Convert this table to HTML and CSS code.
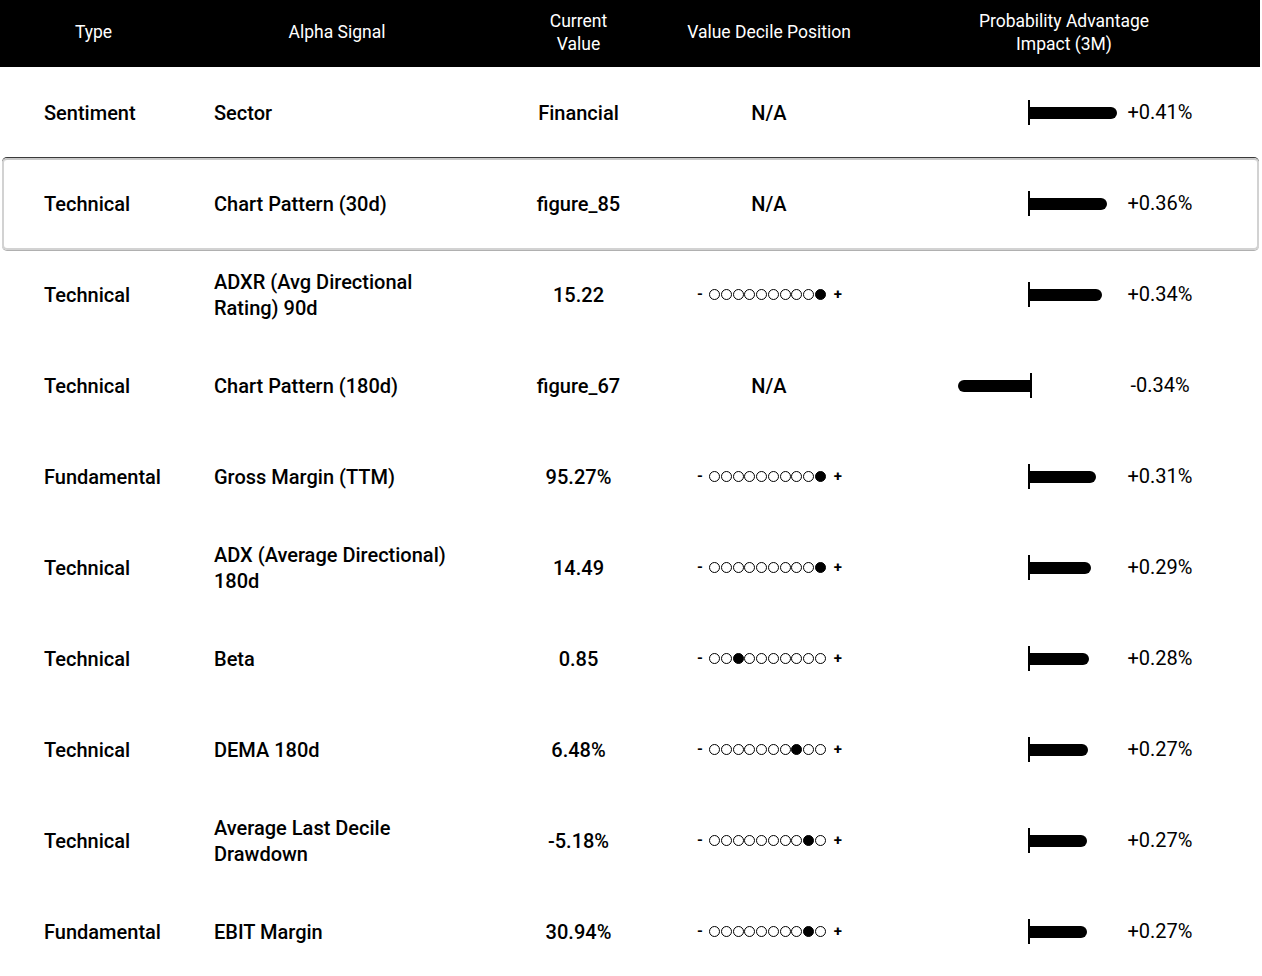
FILE: index.html
```html
<!DOCTYPE html>
<html lang="en">
<head>
<meta charset="utf-8">
<title>Alpha Signals</title>
<link rel="stylesheet" href="styles.css">
</head>
<body>
<div class="table">
  <div class="row head">
    <div class="cell c-type">Type</div>
    <div class="cell c-signal">Alpha Signal</div>
    <div class="cell c-value">Current<br>Value</div>
    <div class="cell c-decile">Value Decile Position</div>
    <div class="cell c-impact">Probability Advantage<br>Impact (3M)</div>
  </div>

  <div class="row">
    <div class="cell c-type">Sentiment</div>
    <div class="cell c-signal">Sector</div>
    <div class="cell c-value">Financial</div>
    <div class="cell c-decile">N/A</div>
    <div class="cell c-impact"><div class="neg"></div><div class="pos"><span class="bar" style="width:87px"></span></div><div class="pct">+0.41%</div></div>
  </div>

  <div class="row active">
    <div class="cell c-type">Technical</div>
    <div class="cell c-signal">Chart Pattern (30d)</div>
    <div class="cell c-value">figure_85</div>
    <div class="cell c-decile">N/A</div>
    <div class="cell c-impact"><div class="neg"></div><div class="pos"><span class="bar" style="width:77px"></span></div><div class="pct">+0.36%</div></div>
  </div>

  <div class="row">
    <div class="cell c-type">Technical</div>
    <div class="cell c-signal">ADXR (Avg Directional Rating) 90d</div>
    <div class="cell c-value">15.22</div>
    <div class="cell c-decile"><span class="dec"><span class="sign">-</span><i></i><i></i><i></i><i></i><i></i><i></i><i></i><i></i><i></i><i class="on"></i><span class="sign">+</span></span></div>
    <div class="cell c-impact"><div class="neg"></div><div class="pos"><span class="bar" style="width:72px"></span></div><div class="pct">+0.34%</div></div>
  </div>

  <div class="row">
    <div class="cell c-type">Technical</div>
    <div class="cell c-signal">Chart Pattern (180d)</div>
    <div class="cell c-value">figure_67</div>
    <div class="cell c-decile">N/A</div>
    <div class="cell c-impact shifted"><div class="neg"><span class="bar" style="width:72px"></span></div><div class="pos"></div><div class="pct">-0.34%</div></div>
  </div>

  <div class="row">
    <div class="cell c-type">Fundamental</div>
    <div class="cell c-signal">Gross Margin (TTM)</div>
    <div class="cell c-value">95.27%</div>
    <div class="cell c-decile"><span class="dec"><span class="sign">-</span><i></i><i></i><i></i><i></i><i></i><i></i><i></i><i></i><i></i><i class="on"></i><span class="sign">+</span></span></div>
    <div class="cell c-impact"><div class="neg"></div><div class="pos"><span class="bar" style="width:66px"></span></div><div class="pct">+0.31%</div></div>
  </div>

  <div class="row">
    <div class="cell c-type">Technical</div>
    <div class="cell c-signal">ADX (Average Directional) 180d</div>
    <div class="cell c-value">14.49</div>
    <div class="cell c-decile"><span class="dec"><span class="sign">-</span><i></i><i></i><i></i><i></i><i></i><i></i><i></i><i></i><i></i><i class="on"></i><span class="sign">+</span></span></div>
    <div class="cell c-impact"><div class="neg"></div><div class="pos"><span class="bar" style="width:61px"></span></div><div class="pct">+0.29%</div></div>
  </div>

  <div class="row">
    <div class="cell c-type">Technical</div>
    <div class="cell c-signal">Beta</div>
    <div class="cell c-value">0.85</div>
    <div class="cell c-decile"><span class="dec"><span class="sign">-</span><i></i><i></i><i class="on"></i><i></i><i></i><i></i><i></i><i></i><i></i><i></i><span class="sign">+</span></span></div>
    <div class="cell c-impact"><div class="neg"></div><div class="pos"><span class="bar" style="width:59px"></span></div><div class="pct">+0.28%</div></div>
  </div>

  <div class="row">
    <div class="cell c-type">Technical</div>
    <div class="cell c-signal">DEMA 180d</div>
    <div class="cell c-value">6.48%</div>
    <div class="cell c-decile"><span class="dec"><span class="sign">-</span><i></i><i></i><i></i><i></i><i></i><i></i><i></i><i class="on"></i><i></i><i></i><span class="sign">+</span></span></div>
    <div class="cell c-impact"><div class="neg"></div><div class="pos"><span class="bar" style="width:58px"></span></div><div class="pct">+0.27%</div></div>
  </div>

  <div class="row">
    <div class="cell c-type">Technical</div>
    <div class="cell c-signal">Average Last Decile Drawdown</div>
    <div class="cell c-value">-5.18%</div>
    <div class="cell c-decile"><span class="dec"><span class="sign">-</span><i></i><i></i><i></i><i></i><i></i><i></i><i></i><i></i><i class="on"></i><i></i><span class="sign">+</span></span></div>
    <div class="cell c-impact"><div class="neg"></div><div class="pos"><span class="bar" style="width:57px"></span></div><div class="pct">+0.27%</div></div>
  </div>

  <div class="row">
    <div class="cell c-type">Fundamental</div>
    <div class="cell c-signal">EBIT Margin</div>
    <div class="cell c-value">30.94%</div>
    <div class="cell c-decile"><span class="dec"><span class="sign">-</span><i></i><i></i><i></i><i></i><i></i><i></i><i></i><i></i><i class="on"></i><i></i><span class="sign">+</span></span></div>
    <div class="cell c-impact"><div class="neg"></div><div class="pos"><span class="bar" style="width:57px"></span></div><div class="pct">+0.27%</div></div>
  </div>
</div>
</body>
</html>
```

FILE: styles.css
```css
* { box-sizing: border-box; }

html, body {
  margin: 0;
  padding: 0;
  background: #fff;
}

body {
  font-family: Roboto, "Liberation Sans", Arial, sans-serif;
  color: #000;
}

.table {
  width: 1260px;
}

.row {
  display: grid;
  grid-template-columns: 187px 300px 183px 198px 392px;
  height: 91px;
  position: relative;
  font-size: 20px;
  font-weight: 500;
  line-height: 26px;
}

.row.head {
  height: 67px;
  background: #000;
  color: #fff;
  font-size: 17.5px;
  font-weight: 400;
  line-height: 23px;
}

.row.head .cell {
  justify-content: center;
  text-align: center;
  padding: 0 0 2px 0;
}

.row.active::after {
  content: "";
  position: absolute;
  top: 0;
  bottom: -1px;
  left: 2px;
  right: 1px;
  border: 2px solid #d2d2d2;
  border-top-color: #c8c8c8;
  border-radius: 5px;
  box-shadow: 0 -1px 0 #3a3a3a, 0 1px 0 #b0b0b0;
  pointer-events: none;
}

.cell {
  display: flex;
  align-items: center;
}

.c-type {
  padding-left: 44px;
}

.c-signal {
  padding-left: 27px;
  padding-right: 28px;
}

.c-value {
  justify-content: center;
  text-align: center;
}

.c-decile {
  justify-content: center;
}

.c-impact {
  padding-left: 62px;
}

.c-impact.shifted {
  padding-left: 64px;
}

.c-impact.shifted .pct {
  margin-left: -2px;
}

.neg,
.pos {
  height: 25px;
  display: flex;
  align-items: center;
}

.neg {
  width: 100px;
  justify-content: flex-end;
  border-right: 2px solid #000;
}

.pos {
  width: 90px;
  justify-content: flex-start;
}

.bar {
  display: block;
  height: 12px;
  background: #000;
}

.pos .bar {
  border-radius: 0 6px 6px 0;
}

.neg .bar {
  border-radius: 6px 0 0 6px;
}

.pct {
  width: 80px;
  text-align: center;
  font-size: 20px;
  font-weight: 400;
  margin-top: -2px;
}

.dec {
  display: flex;
  align-items: center;
  font-size: 15px;
  font-weight: 700;
  line-height: 1;
}

.dec .sign {
  display: inline-block;
  width: 12px;
  text-align: center;
}

.dec .sign:first-child {
  margin-right: 3px;
}

.dec .sign:last-child {
  margin-left: 6px;
}

.dec i {
  display: inline-block;
  width: 11px;
  height: 11px;
  margin: 0 0.35px;
  border: 1.4px solid #000;
  border-radius: 50%;
}

.dec i.on {
  background: #000;
}
```
